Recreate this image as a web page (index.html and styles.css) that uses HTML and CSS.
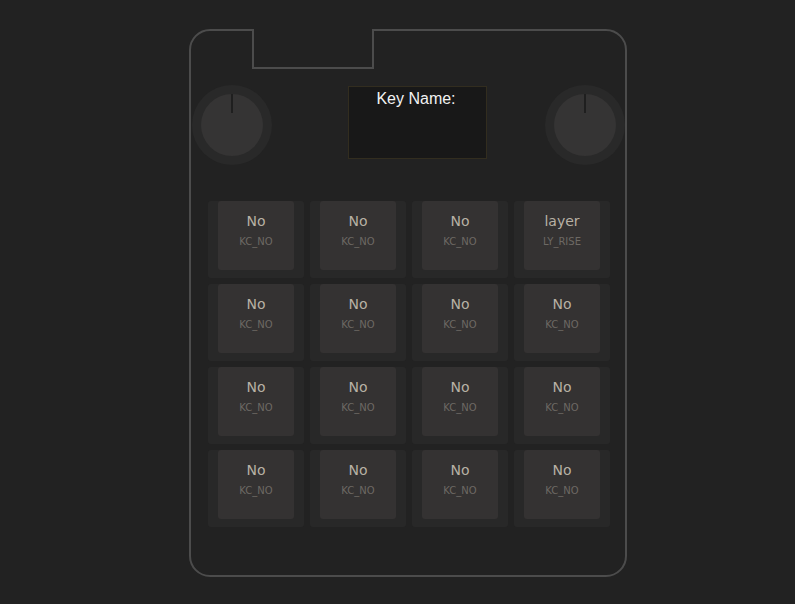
FILE: index.html
```html
<!DOCTYPE html>
<html>
<head>
<meta charset="utf-8">
<link rel="stylesheet" href="styles.css">
</head>
<body>
<div class="board">
  <div class="top">
    <div class="knob"><div class="knob-inner"><div class="pointer"></div></div></div>
    <div class="screen"><div class="screen-title">Key Name:</div></div>
    <div class="knob knob-right"><div class="knob-inner"><div class="pointer"></div></div></div>
  </div>
  <div class="grid">
    <div class="key"><div class="cap"><div class="label">No</div><div class="code">KC_NO</div></div></div>
    <div class="key"><div class="cap"><div class="label">No</div><div class="code">KC_NO</div></div></div>
    <div class="key"><div class="cap"><div class="label">No</div><div class="code">KC_NO</div></div></div>
    <div class="key"><div class="cap"><div class="label">layer</div><div class="code">LY_RISE</div></div></div>
    <div class="key"><div class="cap"><div class="label">No</div><div class="code">KC_NO</div></div></div>
    <div class="key"><div class="cap"><div class="label">No</div><div class="code">KC_NO</div></div></div>
    <div class="key"><div class="cap"><div class="label">No</div><div class="code">KC_NO</div></div></div>
    <div class="key"><div class="cap"><div class="label">No</div><div class="code">KC_NO</div></div></div>
    <div class="key"><div class="cap"><div class="label">No</div><div class="code">KC_NO</div></div></div>
    <div class="key"><div class="cap"><div class="label">No</div><div class="code">KC_NO</div></div></div>
    <div class="key"><div class="cap"><div class="label">No</div><div class="code">KC_NO</div></div></div>
    <div class="key"><div class="cap"><div class="label">No</div><div class="code">KC_NO</div></div></div>
    <div class="key"><div class="cap"><div class="label">No</div><div class="code">KC_NO</div></div></div>
    <div class="key"><div class="cap"><div class="label">No</div><div class="code">KC_NO</div></div></div>
    <div class="key"><div class="cap"><div class="label">No</div><div class="code">KC_NO</div></div></div>
    <div class="key"><div class="cap"><div class="label">No</div><div class="code">KC_NO</div></div></div>
  </div>
  <svg class="outline" width="436" height="546" viewBox="0 0 436 546">
    <path d="M 20 0 H 63 V 38 H 183 V 0 H 416 A 20 20 0 0 1 436 20 V 526 A 20 20 0 0 1 416 546 H 20 A 20 20 0 0 1 0 526 V 20 A 20 20 0 0 1 20 0 Z" fill="none" stroke="#4c4c4c" stroke-width="2"/>
  </svg>
</div>
</body>
</html>
```

FILE: styles.css
```css
html, body {
  margin: 0;
  padding: 0;
  background: #222222;
}

body {
  width: 795px;
  height: 604px;
  overflow: hidden;
  font-family: "DejaVu Sans", sans-serif;
}

.board {
  position: relative;
  width: 436px;
  height: 546px;
  margin: 30px 0 0 190px;
  box-sizing: border-box;
  padding: 55px 1px 0 2px;
}

.outline {
  position: absolute;
  left: 0;
  top: 0;
  overflow: visible;
  pointer-events: none;
}

.top {
  display: flex;
  align-items: flex-start;
  height: 80px;
}

.knob {
  width: 80px;
  height: 80px;
  border-radius: 50%;
  background: #292929;
  box-sizing: border-box;
  padding: 9px;
}

.knob-right {
  margin-left: auto;
}

.knob-inner {
  width: 62px;
  height: 62px;
  border-radius: 50%;
  background: #353434;
  display: flex;
  justify-content: center;
}

.pointer {
  width: 2px;
  height: 19px;
  background: #1f1f1f;
}

.screen {
  margin-left: 76px;
  margin-top: 1px;
  width: 139px;
  height: 73px;
  box-sizing: border-box;
  border: 1px solid #322d1f;
  background: #181818;
  padding-top: 3px;
}

.screen-title {
  font-family: "Liberation Sans", Arial, sans-serif;
  font-size: 16px;
  line-height: 18px;
  color: #f2f2f2;
  text-align: center;
  padding-right: 3px;
}

.grid {
  margin: 36px 0 0 16px;
  display: grid;
  grid-template-columns: repeat(4, 96px);
  grid-auto-rows: 77px;
  gap: 6px;
}

.key {
  background: #282828;
  border-radius: 3px;
  padding: 0 10px;
}

.cap {
  height: 69px;
  background: #343232;
  border-radius: 3px;
  box-sizing: border-box;
  padding-top: 12px;
  text-align: center;
}

.label {
  font-size: 14px;
  line-height: 16px;
  color: #b8b1a5;
}

.code {
  margin-top: 7px;
  font-size: 10px;
  line-height: 12px;
  color: #6d6964;
}
```
